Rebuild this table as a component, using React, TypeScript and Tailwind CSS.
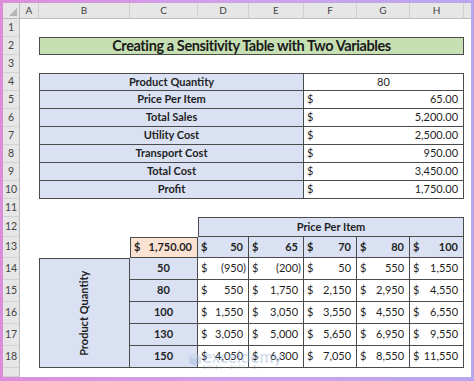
import React from "react";

// --- Sheet data (transcribed from the screenshot) ---
const colLetters = ["A", "B", "C", "D", "E", "F", "G", "H"];

const summary = [
  { label: "Total Sales", value: "5,200.00" },
  { label: "Utility Cost", value: "2,500.00" },
  { label: "Transport Cost", value: "950.00" },
  { label: "Total Cost", value: "3,450.00" },
  { label: "Profit", value: "1,750.00" },
];

const prices = ["50", "65", "70", "80", "100"];

const matrix = [
  { qty: "50", vals: ["(950)", "(200)", "50", "550", "1,550"] },
  { qty: "80", vals: ["550", "1,750", "2,150", "2,950", "4,550"] },
  { qty: "100", vals: ["1,550", "3,050", "3,550", "4,550", "6,550"] },
  { qty: "130", vals: ["3,050", "5,000", "5,650", "6,950", "9,550"] },
  { qty: "150", vals: ["4,050", "6,300", "7,050", "8,550", "11,550"] },
];

const line = "border-[#4b4b4b]";

function RowHead({ n }: { n?: number }) {
  return (
    <div className="flex items-center justify-center bg-[#e6e6e6] border-r border-b border-r-[#bcbcbc] border-b-[#d2d2d2] text-[10.5px] text-[#444]">
      {n}
    </div>
  );
}

// accounting format: $ on the left, number on the right, space kept for ")"
function Acct({ v, bold }: { v: string; bold?: boolean }) {
  const neg = v.startsWith("(");
  return (
    <div className={`flex h-full items-center justify-between pl-[3px] pr-[2px] ${bold ? "font-bold" : ""}`}>
      <span>$</span>
      <span>
        {v}
        {!neg && <span className="invisible">)</span>}
      </span>
    </div>
  );
}

export default function App() {
  return (
    <div className="h-[381px] w-[474px] overflow-hidden bg-[linear-gradient(90deg,#dc8edc_0%,#cfa2ea_50%,#b9a6ee_100%)] pt-[3px] pl-[3px] pr-[3px] pb-[4px]">
      <div className="relative grid h-full grid-cols-[17px_19px_91px_68px_51px_55px_53px_53px_54px_1fr] grid-rows-[16px_repeat(11,18px)_20px_21px_repeat(5,22px)_1fr] bg-white font-[Lato,sans-serif] text-[11px] text-[#1f1f1f]">

        {/* column header row */}
        <div className="relative bg-[#e6e6e6] border-r border-b border-[#bcbcbc]">
          <svg className="absolute right-[2px] bottom-[2px]" width="8" height="8" viewBox="0 0 8 8">
            <polygon points="8,0 8,8 0,8" fill="#b5b5b5" />
          </svg>
        </div>
        {colLetters.map((c) => (
          <div
            key={c}
            className="flex items-center justify-center bg-[#e6e6e6] border-r border-b border-r-[#d0d0d0] border-b-[#bcbcbc] text-[10px] text-[#444]"
          >
            {c}
          </div>
        ))}
        <div className="bg-[#e6e6e6] border-b border-[#bcbcbc]" />

        {/* 1 */}
        <RowHead n={1} />
        <div className="col-span-9" />

        {/* 2: title */}
        <RowHead n={2} />
        <div />
        <div className={`col-span-7 flex items-center justify-center border ${line} bg-[#c6e0b4] text-[14.5px] font-bold tracking-[-0.4px] text-[#1a1a1a]`}>
          Creating a Sensitivity Table with Two Variables
        </div>
        <div />

        {/* 3 */}
        <RowHead n={3} />
        <div className="col-span-9" />

        {/* 4 */}
        <RowHead n={4} />
        <div />
        <div className={`col-span-4 flex items-center justify-center border-l border-t border-r border-b ${line} bg-[#d9e1f2] font-bold`}>
          Product Quantity
        </div>
        <div className={`col-span-3 flex items-center justify-center border-t border-r border-b ${line}`}>80</div>
        <div />

        {/* 5 */}
        <RowHead n={5} />
        <div />
        <div className={`col-span-4 flex items-center justify-center border-l border-r border-b ${line} bg-[#d9e1f2] font-bold`}>
          Price Per Item
        </div>
        <div className={`col-span-3 border-r border-b ${line}`}>
          <Acct v="65.00" />
        </div>
        <div />

        {/* 6 - 10 */}
        {summary.map((s, i) => (
          <React.Fragment key={s.label}>
            <RowHead n={6 + i} />
            <div />
            <div className={`col-span-4 flex items-center justify-center border-l border-r border-b ${line} bg-[#d9e1f2] font-bold`}>
              {s.label}
            </div>
            <div className={`col-span-3 border-r border-b ${line}`}>
              <Acct v={s.value} />
            </div>
            <div />
          </React.Fragment>
        ))}

        {/* 11 */}
        <RowHead n={11} />
        <div className="col-span-9" />

        {/* 12 */}
        <RowHead n={12} />
        <div className="col-span-3" />
        <div className={`col-span-5 flex items-center justify-center border ${line} bg-[#d9e1f2] font-bold`}>
          Price Per Item
        </div>
        <div />

        {/* 13 */}
        <RowHead n={13} />
        <div className="col-span-2" />
        <div className={`border ${line} bg-[#fbe2d2]`}>
          <Acct v="1,750.00" bold />
        </div>
        {prices.map((p) => (
          <div key={p} className={`border-r border-b ${line} bg-[#d9e1f2]`}>
            <Acct v={p} bold />
          </div>
        ))}
        <div />

        {/* 14 - 18 */}
        {matrix.map((r, i) => (
          <React.Fragment key={r.qty}>
            <RowHead n={14 + i} />
            <div />
            {i === 0 && (
              <div className={`row-span-5 flex items-center justify-center border ${line} bg-[#d9e1f2] font-bold`}>
                <span className="-rotate-90 whitespace-nowrap">Product Quantity</span>
              </div>
            )}
            <div className={`flex items-center justify-center border-r border-b ${line} bg-[#d9e1f2] font-bold`}>
              {r.qty}
            </div>
            {r.vals.map((v, j) => (
              <div key={j} className={`border-r border-b ${line}`}>
                <Acct v={v} />
              </div>
            ))}
            <div />
          </React.Fragment>
        ))}

        {/* partial last row */}
        <RowHead />
        <div className="col-span-9" />

        {/* watermark */}
        <div className="pointer-events-none absolute left-[186px] top-[345px] flex items-center gap-[2px] opacity-40">
          <svg width="12" height="13" viewBox="0 0 12 13">
            <polygon points="6,0 12,3 12,10 6,13 0,10 0,3" fill="#9db3d8" />
            <polygon points="6,0 12,3 6,6 0,3" fill="#c3d2ec" />
          </svg>
          <div className="flex flex-col leading-none">
            <span className="text-[17px] text-[#7f9fd0]">exceldemy</span>
            <span className="text-[5px] tracking-[1px] text-[#8a9ab5]">EXCEL · DATA · BI</span>
          </div>
        </div>
      </div>
    </div>
  );
}
